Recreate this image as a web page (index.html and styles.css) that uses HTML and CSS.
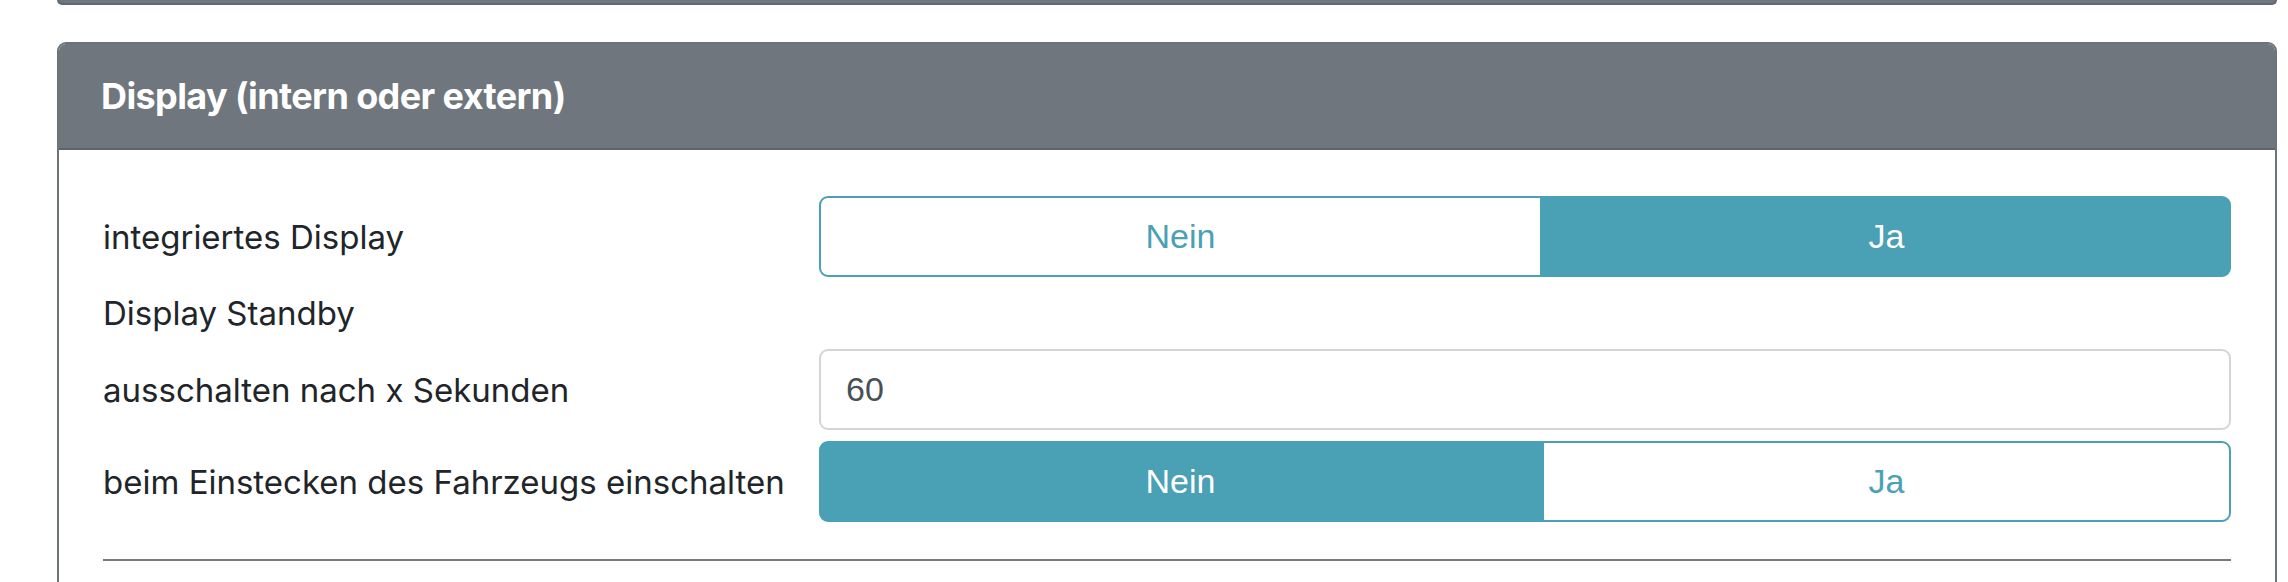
FILE: index.html
```html
<!DOCTYPE html>
<html lang="de">
<head>
<meta charset="utf-8">
<title>Display</title>
<link rel="stylesheet" href="styles.css">
</head>
<body>
<div class="page">
  <div class="prev-card"></div>
  <section class="card">
    <header class="card-header">Display (intern oder extern)</header>
    <div class="card-body">
      <div class="form">
        <div class="form-row">
          <label class="label">integriertes Display</label>
          <div class="btn-group">
            <button class="btn">Nein</button>
            <button class="btn btn-active">Ja</button>
          </div>
        </div>
        <div class="form-row form-row-plain">
          <label class="label">Display Standby</label>
        </div>
        <div class="form-row">
          <label class="label">ausschalten nach x Sekunden</label>
          <input class="input" type="text" value="60">
        </div>
        <div class="form-row">
          <label class="label">beim Einstecken des Fahrzeugs einschalten</label>
          <div class="btn-group">
            <button class="btn btn-active">Nein</button>
            <button class="btn">Ja</button>
          </div>
        </div>
      </div>
      <hr class="divider">
    </div>
  </section>
</div>
</body>
</html>
```

FILE: styles.css
```css
html, body {
  margin: 0;
  padding: 0;
  background: #ffffff;
}

body {
  font-family: Inter, "Liberation Sans", sans-serif;
  color: #212529;
  overflow: hidden;
}

.page {
  padding: 0 11px 0 57px;
}

.prev-card {
  height: 3px;
  background: #6f767d;
  border: 2px solid #61686f;
  border-top: none;
  border-radius: 0 0 8px 8px;
  margin-bottom: 37px;
}

.card {
  border: 2px solid #6c737a;
  border-radius: 9px;
  overflow: hidden;
  background: #ffffff;
}

.card-header {
  background: #6f767d;
  color: #ffffff;
  font-family: Inter, "Liberation Sans", sans-serif;
  font-weight: 700;
  font-size: 36px;
  letter-spacing: -0.6px;
  line-height: 48px;
  padding: 28px 42px 28px 42px;
  border-bottom: 2px solid #5d646b;
}

.card-body {
  padding: 46px 44px 44px 44px;
}

.form {
  display: flex;
  flex-direction: column;
  gap: 11px;
}

.form-row {
  display: grid;
  grid-template-columns: 716px 1fr;
  align-items: center;
}

.label {
  font-size: 33px;
  line-height: 50px;
  color: #212529;
}

.btn-group {
  display: flex;
}

.btn {
  flex: 1 1 auto;
  font-family: "Liberation Sans", Arial, sans-serif;
  font-size: 34px;
  line-height: 49px;
  padding: 14px 24px;
  border: 2px solid #4aa0b5;
  background: #ffffff;
  color: #4aa0b5;
  text-align: center;
  margin: 0;
}

.btn:first-child {
  border-radius: 9px 0 0 9px;
}

.btn:last-child {
  border-radius: 0 9px 9px 0;
}

.btn-active {
  background: #4aa0b5;
  color: #ffffff;
}

.input {
  display: block;
  box-sizing: border-box;
  width: 100%;
  height: 81px;
  font-family: "Liberation Sans", Arial, sans-serif;
  font-size: 34px;
  color: #495057;
  padding: 0 25px;
  border: 2px solid #d3d6d9;
  border-radius: 9px;
  background: #ffffff;
  margin: 0;
}

.divider {
  border: none;
  border-top: 2px solid #74797e;
  margin: 37px 0 0 0;
}
```
